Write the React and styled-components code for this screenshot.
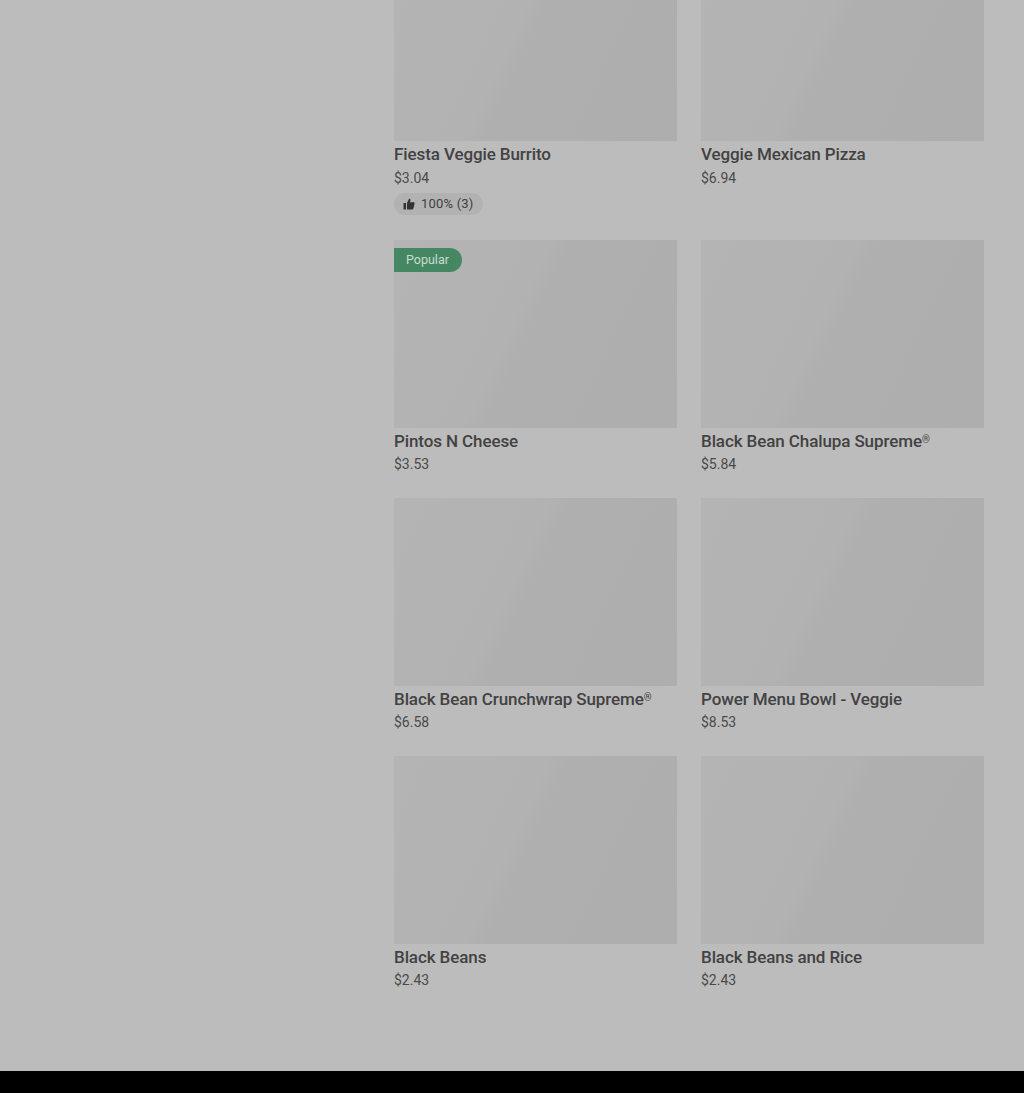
import styled, { createGlobalStyle } from "styled-components"

const Global = createGlobalStyle`
    html, body {
        margin: 0;
        background: #bcbcbc;
    }
    body {
        font-family: Roboto, "Liberation Sans", sans-serif;
    }
`

const items = [
    { id: 1, name: "Fiesta Veggie Burrito", price: "$3.04", rating: "100% (3)" },
    { id: 2, name: "Veggie Mexican Pizza", price: "$6.94" },
    { id: 3, name: "Pintos N Cheese", price: "$3.53", popular: true },
    { id: 4, name: "Black Bean Chalupa Supreme", reg: true, price: "$5.84" },
    { id: 5, name: "Black Bean Crunchwrap Supreme", reg: true, price: "$6.58" },
    { id: 6, name: "Power Menu Bowl - Veggie", price: "$8.53" },
    { id: 7, name: "Black Beans", price: "$2.43" },
    { id: 8, name: "Black Beans and Rice", price: "$2.43" },
]

export default function App() {
    return (
        <Page>
            <Global />
            <Main>
                <Grid>
                    {items.map((item) => (
                        <Card key={item.id}>
                            <Photo>
                                {item.popular && <Badge>Popular</Badge>}
                            </Photo>
                            <Name>
                                {item.name}
                                {item.reg && <Reg>®</Reg>}
                            </Name>
                            <Price>{item.price}</Price>
                            {item.rating && (
                                <Rating>
                                    <ThumbIcon />
                                    {item.rating}
                                </Rating>
                            )}
                        </Card>
                    ))}
                </Grid>
            </Main>
            <Footer />
        </Page>
    )
}

function ThumbIcon() {
    return (
        <svg width="12" height="12" viewBox="0 0 12 12" fill="#333333">
            <rect x="0.5" y="5" width="2.5" height="6.5" />
            <path d="M4 5 L6 0.8 C7 0.6 7.6 1.3 7.4 2.3 L7 4.2 L10.6 4.2 C11.4 4.2 11.8 4.9 11.6 5.6 L10.4 10.6 C10.2 11.2 9.8 11.5 9.2 11.5 L4 11.5 Z" />
        </svg>
    )
}

const Page = styled.div`
    height: 1093px;
    overflow: hidden;
    display: flex;
    flex-direction: column;
`
const Main = styled.main`
    flex: 1;
    padding: 0 40px 0 394px;
    overflow: hidden;
`
const Grid = styled.div`
    display: grid;
    grid-template-columns: 283px 283px;
    column-gap: 24px;
    row-gap: 24px;
    margin-top: -46.6px;
`
const Card = styled.article`
    display: flex;
    flex-direction: column;
    align-items: flex-start;
`
const Photo = styled.div`
    align-self: stretch;
    height: 188px;
    padding-top: 8px;
    box-sizing: border-box;
    background: linear-gradient(115deg, #b4b4b4 0%, #b2b2b2 42%, #afafaf 48%, #aeaeae 100%);
`
const Badge = styled.span`
    display: inline-block;
    height: 24px;
    line-height: 24px;
    padding: 0 13px 0 12px;
    border-radius: 0 12px 12px 0;
    background: #468763;
    color: #c9dcd0;
    font-size: 12.5px;
`
const Name = styled.h3`
    margin: 0;
    height: 27.4px;
    line-height: 27.4px;
    font-size: 17px;
    font-weight: 500;
    letter-spacing: -0.1px;
    color: #424242;
`
const Reg = styled.sup`
    font-size: 10px;
    line-height: 0;
    vertical-align: 4px;
`
const Price = styled.div`
    height: 18.6px;
    line-height: 18px;
    font-size: 14px;
    font-weight: 400;
    color: #4a4a4a;
`
const Rating = styled.div`
    display: flex;
    align-items: center;
    gap: 6px;
    height: 22px;
    margin: 5.6px 0 1px;
    padding: 0 9px;
    border-radius: 11px;
    background: #b2b2b2;
    color: #3f3f3f;
    font-size: 13px;
    letter-spacing: 0.2px;
`
const Footer = styled.footer`
    height: 22px;
    flex-shrink: 0;
    background: #000;
`
